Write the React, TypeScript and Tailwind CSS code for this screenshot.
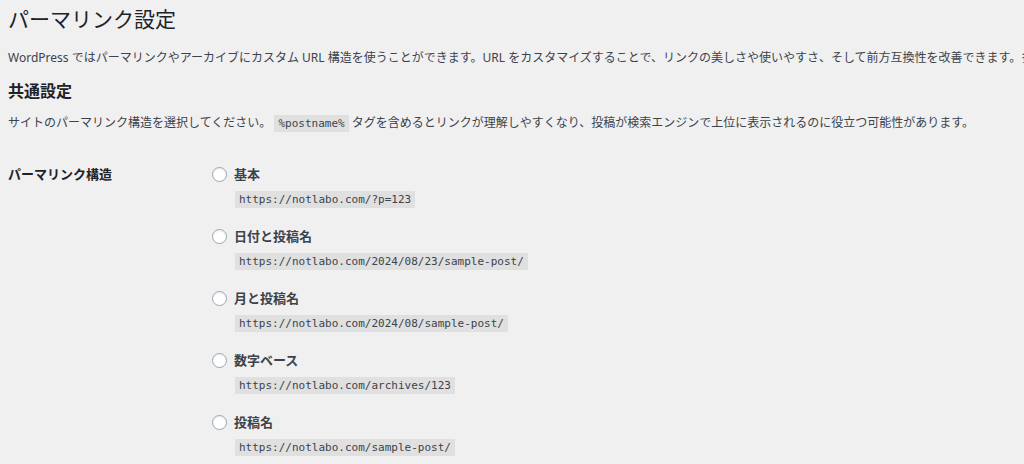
import * as React from "react";

const options = [
  { label: "基本", url: "https://notlabo.com/?p=123" },
  { label: "日付と投稿名", url: "https://notlabo.com/2024/08/23/sample-post/" },
  { label: "月と投稿名", url: "https://notlabo.com/2024/08/sample-post/" },
  { label: "数字ベース", url: "https://notlabo.com/archives/123" },
  { label: "投稿名", url: "https://notlabo.com/sample-post/" },
];

const sans = 'font-["Noto_Sans","Noto_Sans_CJK_JP",sans-serif]';
const mono = 'font-["DejaVu_Sans_Mono","Noto_Sans_CJK_JP",monospace]';

function Code({ children }: { children: React.ReactNode }) {
  return (
    <code className={`${mono} inline-block bg-[#e0e0e1] px-[4px] text-[11px] leading-[17px] text-[#3c434a]`}>
      {children}
    </code>
  );
}

export default function App() {
  const [selected, setSelected] = React.useState<number | null>(null);

  return (
    <div className={`${sans} h-[464px] w-[1024px] overflow-hidden bg-[#f0f0f1] pl-[8px] text-[#3c434a]`}>
      <h1 className="pt-[4px] text-[21px] font-normal leading-[30px] text-[#1d2327]">パーマリンク設定</h1>

      <p className="mt-[15px] whitespace-nowrap text-[12px] leading-[18px]">
        WordPress ではパーマリンクやアーカイブにカスタム URL 構造を使うことができます。URL
        をカスタマイズすることで、リンクの美しさや使いやすさ、そして前方互換性を改善できます。多数のタグが利用可能です。
      </p>

      <h2 className="mt-[13px] text-[16px] font-bold leading-[22px] text-[#1d2327]">共通設定</h2>

      <p className="mt-[12px] whitespace-nowrap text-[12px] leading-[18px]">
        サイトのパーマリンク構造を選択してください。 <Code>%postname%</Code>{" "}
        タグを含めるとリンクが理解しやすくなり、投稿が検索エンジンで上位に表示されるのに役立つ可能性があります。
      </p>

      <div className="mt-[32px] flex">
        <div className="w-[204px] shrink-0 text-[13px] font-bold leading-[20px] text-[#1d2327]">パーマリンク構造</div>
        <ul className="flex flex-col gap-[18px]">
          {options.map((o, i) => (
            <li key={o.label} className="flex flex-col">
              <label className="flex cursor-pointer items-center gap-[7px]" onClick={() => setSelected(i)}>
                <span className="flex h-[15px] w-[15px] items-center justify-center rounded-full border border-[#9aa6b4] bg-white shadow-[inset_0_1px_2px_rgba(0,0,0,0.08)]">
                  {selected === i && <span className="h-[7px] w-[7px] rounded-full bg-[#2271b1]" />}
                </span>
                <span className="text-[13px] font-bold leading-[20px] text-[#3c434a]">{o.label}</span>
              </label>
              <div className="ml-[23px] mt-[7px] flex">
                <Code>{o.url}</Code>
              </div>
            </li>
          ))}
        </ul>
      </div>
    </div>
  );
}
